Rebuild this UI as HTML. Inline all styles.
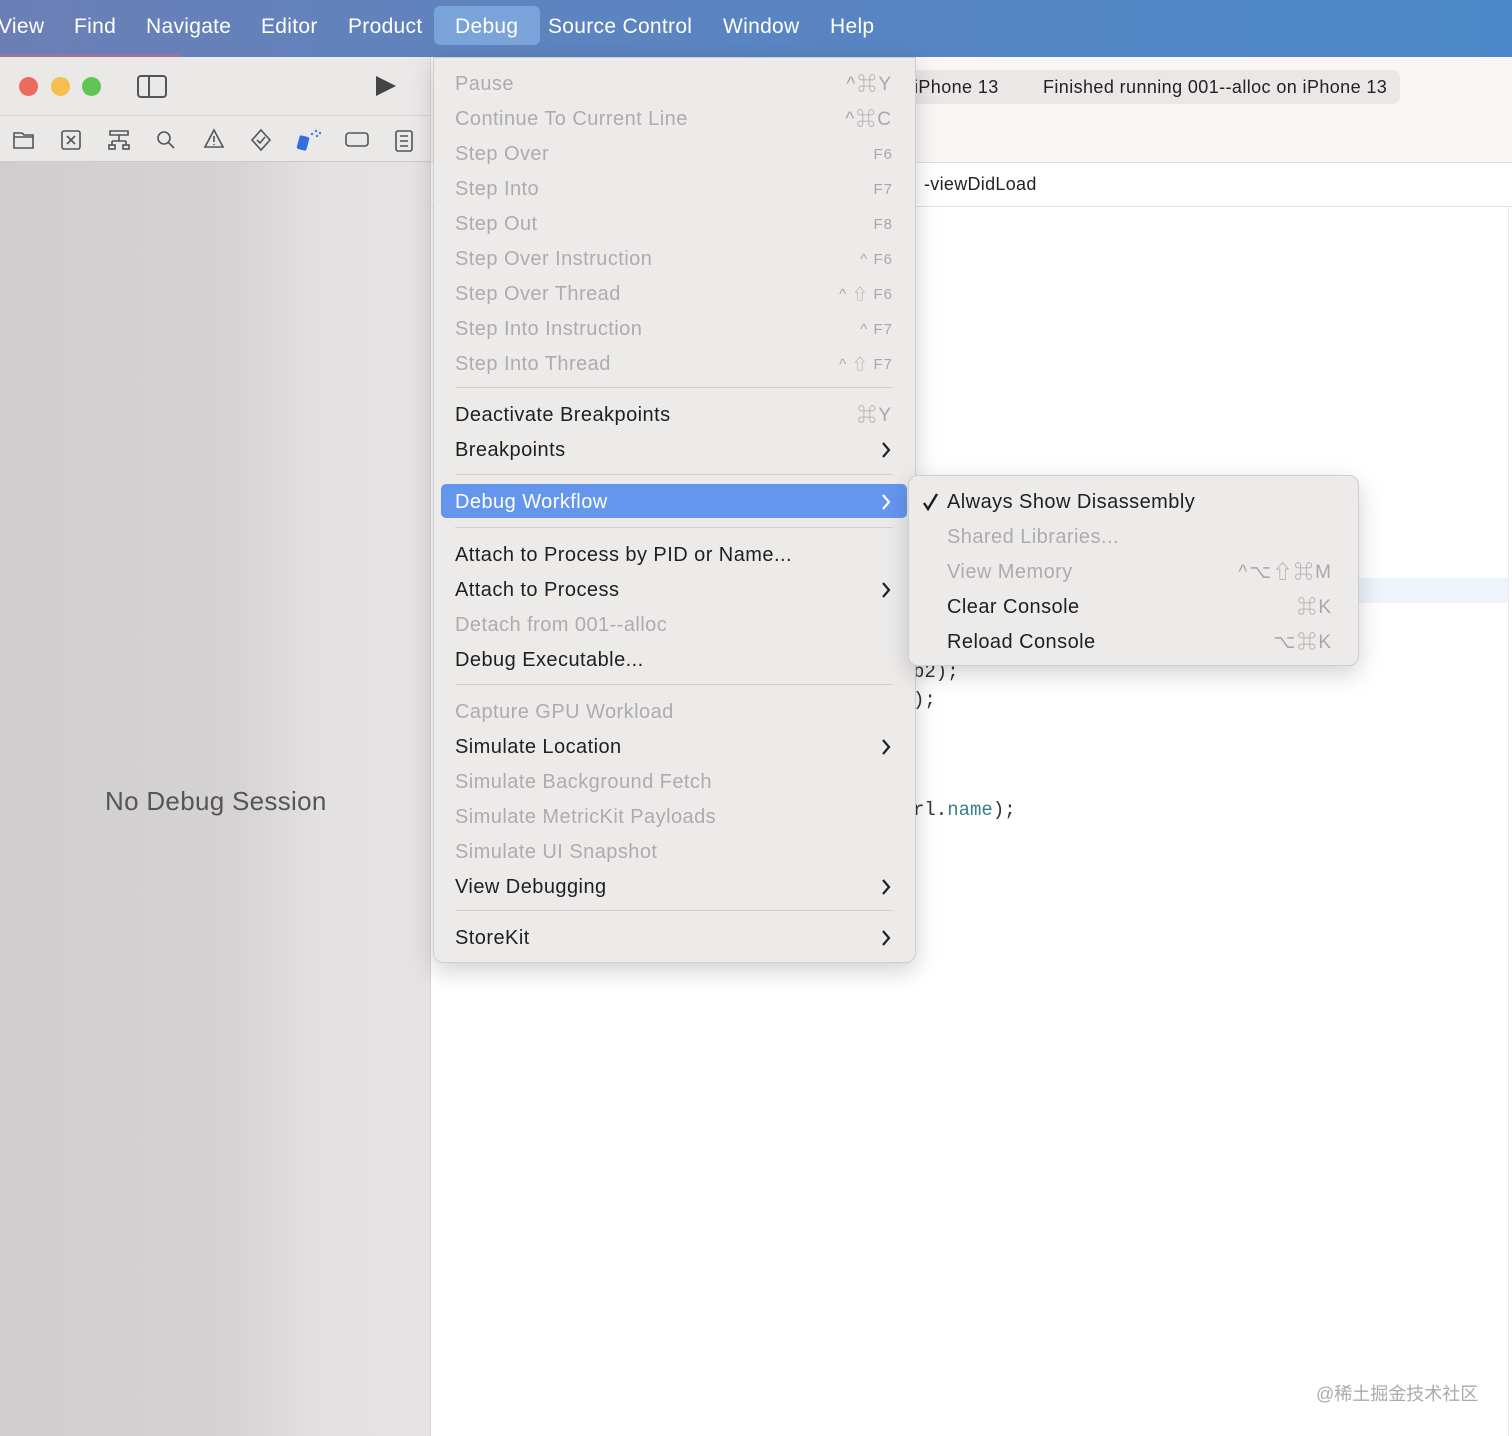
<!DOCTYPE html>
<html><head><meta charset="utf-8"><style>
*{margin:0;padding:0;box-sizing:border-box}
body{width:1512px;height:1436px;position:relative;overflow:hidden;background:#fff;font-family:"Liberation Sans","Noto Sans CJK SC",sans-serif}
.abs{position:absolute}
#menubar{left:0;top:0;width:1512px;height:57px;background:linear-gradient(90deg,#6b7fb6 0%,#5c84c0 40%,#4c88c9 100%)}
#menubar span{position:absolute;top:1px;line-height:52px;color:#fff;font-size:21px;letter-spacing:.3px}
#side{left:0;top:57px;width:431px;height:1379px;background:linear-gradient(90deg,#d0cdce 0%,#d6d3d5 55%,#e4e1e2 75%,#e5e2e3 100%)}
#sidetop{left:0;top:57px;width:431px;height:105px;background:#ebe8e8}
.item{position:absolute;left:455px;height:35px;line-height:37px;font-size:20px;color:#1f1f1f;width:440px;letter-spacing:.45px}
.dis{color:#adabab}
.sc{position:absolute;right:2px;top:0;color:#a9a7a7;font-size:19px;letter-spacing:2px}
.sc.f{font-size:15px;letter-spacing:1px}
.chev{position:absolute;right:4px;top:10px}
.sep{position:absolute;left:455px;width:438px;height:1px;background:#d2d0d0}
.code{font-family:"Liberation Mono",monospace;font-size:19px;color:#333;position:absolute}
</style></head><body>
<div id="menubar" class="abs">
<span style="left:-2px">View</span><span style="left:74px">Find</span><span style="left:146px">Navigate</span><span style="left:261px">Editor</span><span style="left:348px">Product</span>
<div class="abs" style="left:434px;top:6px;width:106px;height:39px;background:#7aa3da;border-radius:6px"></div>
<span style="left:455px">Debug</span><span style="left:548px">Source Control</span><span style="left:723px">Window</span><span style="left:830px">Help</span>
</div>
<div class="abs" style="left:0;top:54px;width:180px;height:3px;background:#c06a8a;opacity:.6"></div>
<div id="side" class="abs"></div>
<div id="sidetop" class="abs"></div>
<div class="abs" style="left:0;top:115px;width:431px;height:1px;background:#d5d2d2"></div>
<div class="abs" style="left:0;top:161px;width:431px;height:1px;background:#ccc9c9"></div>
<div class="abs" style="left:430px;top:57px;width:1px;height:1379px;background:#d8d6d6"></div>
<div class="abs" style="left:19px;top:77px;width:19px;height:19px;border-radius:50%;background:#ec6a5e"></div>
<div class="abs" style="left:51px;top:77px;width:19px;height:19px;border-radius:50%;background:#f4bf4f"></div>
<div class="abs" style="left:82px;top:77px;width:19px;height:19px;border-radius:50%;background:#61c554"></div>
<div class="abs" style="left:137px;top:75px;width:30px;height:23px;border:2px solid #555;border-radius:4px"><div style="position:absolute;left:9px;top:0;width:2px;height:19px;background:#555"></div></div>
<svg class="abs" style="left:374px;top:74px" width="24" height="24"><path d="M2 2 L22 12 L2 22Z" fill="#444"/></svg>
<svg class="abs" style="left:10px;top:126px" width="410" height="30" fill="none" stroke="#555" stroke-width="1.6">
<path d="M4 7h8l2 2h9v13H4z M4 11h19"/>
<rect x="52" y="5" width="18" height="18" rx="2"/><path d="M57 10l8 8M65 10l-8 8"/>
<path d="M100 5h18v4h-18z M109 9v6 M102 15h14 M102 15v4 M116 15v4"/><rect x="99" y="19" width="6" height="4"/><rect x="113" y="19" width="6" height="4"/>
<circle cx="154" cy="12" r="6"/><path d="M158 16l6 6"/>
<path d="M204 4l9 17h-18z M204 10v6 M204 18v1"/>
<path d="M251 4l9 10-9 10-9-10z M247 14l3 3 5-6"/>
<rect x="336" y="7" width="22" height="13" rx="3" />
<rect x="386" y="5" width="16" height="20" rx="2"/><path d="M390 10h8M390 15h8M390 20h8"/>
</svg>
<svg class="abs" style="left:296px;top:128px" width="28" height="26"><rect x="2" y="8" width="10" height="14" rx="2" fill="#2f6fe0" transform="rotate(15 7 15)"/><circle cx="16" cy="6" r="1.2" fill="#3b7de8"/><circle cx="20" cy="3" r="1.2" fill="#3b7de8"/><circle cx="21" cy="8" r="1.2" fill="#3b7de8"/><circle cx="24" cy="5" r="1.2" fill="#3b7de8"/></svg>
<div class="abs" style="left:105px;top:786px;font-size:26px;color:#555;letter-spacing:.3px">No Debug Session</div>
<div class="abs" style="left:431px;top:57px;width:1081px;height:105px;background:#faf6f6"></div>
<div class="abs" style="left:900px;top:70px;width:500px;height:34px;background:#ebe7e7;border-radius:8px"></div>
<div class="abs" style="left:914px;top:77px;font-size:18px;color:#222;letter-spacing:.4px">iPhone 13</div>
<div class="abs" style="left:1043px;top:77px;font-size:18px;color:#222;letter-spacing:.4px">Finished running 001--alloc on iPhone 13</div>
<div class="abs" style="left:431px;top:162px;width:1081px;height:1px;background:#ddd"></div>
<div class="abs" style="left:431px;top:206px;width:1081px;height:1px;background:#e2e2e2"></div>
<div class="abs" style="left:924px;top:174px;font-size:18px;color:#222;letter-spacing:.3px">-viewDidLoad</div>
<div class="abs" style="left:1508px;top:207px;width:1px;height:1229px;background:#e8e8e8"></div>
<div class="abs" style="left:916px;top:578px;width:592px;height:25px;background:#eef4fc"></div>
<div class="code" style="left:913px;top:661px">b2);</div>
<div class="code" style="left:913px;top:689px">);</div>
<div class="code" style="left:913px;top:799px">rl.<span style="color:#3a7f8a">name</span>);</div>
<div class="abs" style="left:1316px;top:1380px;font-size:18px;color:#aaa">@稀土掘金技术社区</div>
<div class="abs" style="left:433px;top:57px;width:483px;height:906px;background:#ecebea;border:1px solid #cfcdcd;border-radius:0 0 10px 10px;box-shadow:0 8px 24px rgba(0,0,0,.18)"></div>
<div class="item dis" style="top:66px">Pause<span class="sc">^⌘Y</span></div>
<div class="item dis" style="top:101px">Continue To Current Line<span class="sc">^⌘C</span></div>
<div class="item dis" style="top:136px">Step Over<span class="sc f">F6</span></div>
<div class="item dis" style="top:171px">Step Into<span class="sc f">F7</span></div>
<div class="item dis" style="top:206px">Step Out<span class="sc f">F8</span></div>
<div class="item dis" style="top:241px">Step Over Instruction<span class="sc f">^ F6</span></div>
<div class="item dis" style="top:276px">Step Over Thread<span class="sc f">^ ⇧ F6</span></div>
<div class="item dis" style="top:311px">Step Into Instruction<span class="sc f">^ F7</span></div>
<div class="item dis" style="top:346px">Step Into Thread<span class="sc f">^ ⇧ F7</span></div>
<div class="sep" style="top:387px"></div>
<div class="item" style="top:397px">Deactivate Breakpoints<span class="sc">⌘Y</span></div>
<div class="item" style="top:432px">Breakpoints<svg class="chev" width="10" height="16"><path d="M2 1l6 7-6 7" fill="none" stroke="#222" stroke-width="2.2"/></svg></div>
<div class="sep" style="top:474px"></div>
<div class="abs" style="left:441px;top:484px;width:466px;height:34px;background:#6496ee;border-radius:5px"></div>
<div class="item" style="top:484px;color:#fff">Debug Workflow<svg class="chev" width="10" height="16"><path d="M2 1l6 7-6 7" fill="none" stroke="#fff" stroke-width="2.2"/></svg></div>
<div class="sep" style="top:527px"></div>
<div class="item" style="top:537px">Attach to Process by PID or Name...</div>
<div class="item" style="top:572px">Attach to Process<svg class="chev" width="10" height="16"><path d="M2 1l6 7-6 7" fill="none" stroke="#222" stroke-width="2.2"/></svg></div>
<div class="item dis" style="top:607px">Detach from 001--alloc</div>
<div class="item" style="top:642px">Debug Executable...</div>
<div class="sep" style="top:684px"></div>
<div class="item dis" style="top:694px">Capture GPU Workload</div>
<div class="item" style="top:729px">Simulate Location<svg class="chev" width="10" height="16"><path d="M2 1l6 7-6 7" fill="none" stroke="#222" stroke-width="2.2"/></svg></div>
<div class="item dis" style="top:764px">Simulate Background Fetch</div>
<div class="item dis" style="top:799px">Simulate MetricKit Payloads</div>
<div class="item dis" style="top:834px">Simulate UI Snapshot</div>
<div class="item" style="top:869px">View Debugging<svg class="chev" width="10" height="16"><path d="M2 1l6 7-6 7" fill="none" stroke="#222" stroke-width="2.2"/></svg></div>
<div class="sep" style="top:910px"></div>
<div class="item" style="top:920px">StoreKit<svg class="chev" width="10" height="16"><path d="M2 1l6 7-6 7" fill="none" stroke="#222" stroke-width="2.2"/></svg></div>
<div class="abs" style="left:908px;top:475px;width:451px;height:191px;background:#ecebea;border:1px solid #cfcdcd;border-radius:10px;box-shadow:0 8px 24px rgba(0,0,0,.18)"></div>
<svg class="abs" style="left:922px;top:492px" width="18" height="20"><path d="M2 11l4 6 9-15" fill="none" stroke="#1f1f1f" stroke-width="2.4"/></svg>
<div class="item" style="left:947px;width:388px;top:484px">Always Show Disassembly</div>
<div class="item dis" style="left:947px;width:388px;top:519px">Shared Libraries...</div>
<div class="item dis" style="left:947px;width:388px;top:554px">View Memory<span class="sc">^⌥⇧⌘M</span></div>
<div class="item" style="left:947px;width:388px;top:589px">Clear Console<span class="sc">⌘K</span></div>
<div class="item" style="left:947px;width:388px;top:624px">Reload Console<span class="sc">⌥⌘K</span></div>
</body></html>
